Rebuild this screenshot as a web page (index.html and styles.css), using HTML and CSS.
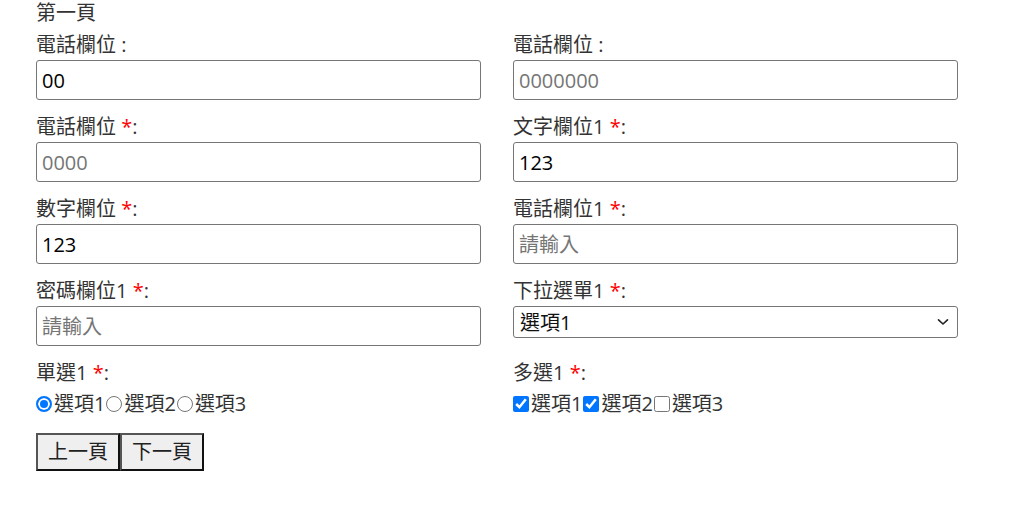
FILE: index.html
```html
<!DOCTYPE html>
<html lang="zh-Hant">
<head>
<meta charset="utf-8">
<title>第一頁</title>
<link rel="stylesheet" href="styles.css">
</head>
<body>
<div class="page">
  <div class="page-title">第一頁</div>
  <form class="form-grid">
    <div class="field">
      <label class="field-label">電話欄位 :</label>
      <input class="text-input" type="tel" value="00">
    </div>
    <div class="field">
      <label class="field-label">電話欄位 :</label>
      <input class="text-input" type="tel" placeholder="0000000">
    </div>
    <div class="field">
      <label class="field-label">電話欄位 <span class="req">*</span>:</label>
      <input class="text-input" type="tel" placeholder="0000">
    </div>
    <div class="field">
      <label class="field-label">文字欄位1 <span class="req">*</span>:</label>
      <input class="text-input" type="text" value="123">
    </div>
    <div class="field">
      <label class="field-label">數字欄位 <span class="req">*</span>:</label>
      <input class="text-input" type="text" value="123">
    </div>
    <div class="field">
      <label class="field-label">電話欄位1 <span class="req">*</span>:</label>
      <input class="text-input" type="tel" placeholder="請輸入">
    </div>
    <div class="field">
      <label class="field-label">密碼欄位1 <span class="req">*</span>:</label>
      <input class="text-input" type="password" placeholder="請輸入">
    </div>
    <div class="field">
      <label class="field-label">下拉選單1 <span class="req">*</span>:</label>
      <div class="select-wrap">
        <select class="select-input">
          <option>選項1</option>
          <option>選項2</option>
          <option>選項3</option>
        </select>
        <svg class="select-chevron" width="12" height="8" viewBox="0 0 12 8" aria-hidden="true"><path d="M1.5 1.8 L6 6 L10.5 1.8" fill="none" stroke="#222" stroke-width="1.6" stroke-linecap="round" stroke-linejoin="round"/></svg>
      </div>
    </div>
    <div class="field">
      <label class="field-label">單選1 <span class="req">*</span>:</label>
      <div class="choices"><label class="choice"><input class="radio" type="radio" name="r1" checked>選項1</label><label class="choice"><input class="radio" type="radio" name="r1">選項2</label><label class="choice"><input class="radio" type="radio" name="r1">選項3</label></div>
    </div>
    <div class="field">
      <label class="field-label">多選1 <span class="req">*</span>:</label>
      <div class="choices"><label class="choice"><input class="check" type="checkbox" checked>選項1</label><label class="choice"><input class="check" type="checkbox" checked>選項2</label><label class="choice"><input class="check" type="checkbox">選項3</label></div>
    </div>
  </form>
  <div class="nav-buttons"><button class="nav-btn" type="button">上一頁</button><button class="nav-btn" type="button">下一頁</button></div>
</div>
</body>
</html>
```

FILE: styles.css
```css
html, body {
  margin: 0;
  padding: 0;
  background: #fff;
}

body {
  font-family: "Open Sans", "Noto Sans CJK TC", sans-serif;
  font-size: 20px;
  color: #333;
}

.page {
  padding: 1px 36px 0;
}

.page-title {
  line-height: 24px;
  margin-bottom: 8px;
}

.form-grid {
  display: grid;
  grid-template-columns: 445px 445px;
  column-gap: 32px;
  row-gap: 15px;
}

.field {
  display: flex;
  flex-direction: column;
  gap: 3px;
  align-items: stretch;
}

.field-label {
  line-height: 24px;
}

.req {
  color: #f00;
}

.text-input {
  box-sizing: border-box;
  height: 40px;
  margin: 0;
  padding: 0 5px;
  font: inherit;
  font-size: 20px;
  color: #000;
  border: 1px solid #767676;
  border-radius: 3px;
  background: #fff;
}

.text-input::placeholder {
  color: #757575;
}

.select-wrap {
  position: relative;
  display: flex;
}

.select-input {
  flex: 1;
  box-sizing: border-box;
  height: 32px;
  margin: 0;
  padding: 0 30px 0 6px;
  font: inherit;
  font-size: 20px;
  color: #111;
  border: 1px solid #767676;
  border-radius: 3px;
  background: #fff;
  appearance: none;
  -webkit-appearance: none;
}

.select-chevron {
  position: absolute;
  right: 9px;
  top: 12px;
  pointer-events: none;
}

.choices {
  display: flex;
  line-height: 24px;
  margin-top: 4px;
}

.choice {
  display: flex;
  align-items: center;
}

.choice input {
  margin: 0 2px 0 1px;
}

.choice:first-child input {
  margin-left: 0;
}

.radio {
  appearance: none;
  -webkit-appearance: none;
  box-sizing: border-box;
  width: 16px;
  height: 16px;
  border: 1px solid #767676;
  border-radius: 50%;
  background: #fff;
}

.radio:checked {
  border: 2px solid #0075ff;
  background: #0075ff;
  box-shadow: inset 0 0 0 2px #fff;
}

.check {
  width: 16px;
  height: 16px;
}

.nav-buttons {
  display: flex;
  margin-top: 17px;
}

.nav-btn {
  font: inherit;
  font-size: 20px;
  line-height: 24px;
  color: #222;
  background: #efefef;
  padding: 5px 10px;
  margin: 0;
  border: 2px solid;
  border-color: #555 #111 #111 #555;
}
```
